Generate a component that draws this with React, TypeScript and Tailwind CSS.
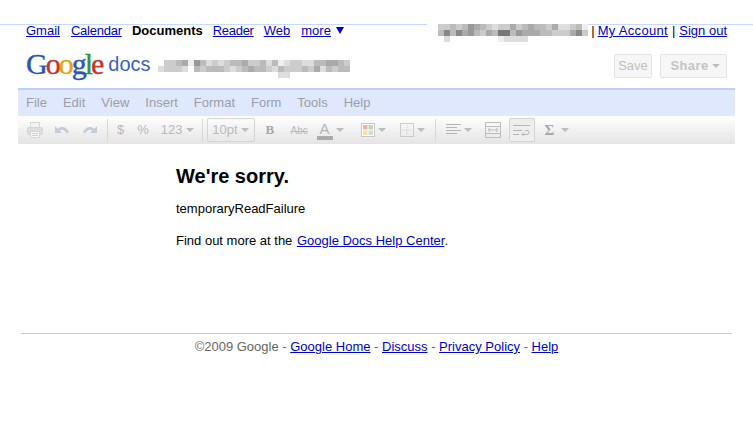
import type { ReactNode } from "react";

const SHADES = ["#ffffff", "#eeeeee", "#dddddd", "#cccccc", "#bbbbbb", "#aaaaaa", "#999999", "#888888", "#777777", "#666666"];

// blurred out bits of the screenshot (account email, doc title)
const EMAIL_BLUR = [
  "3343465432335345443522341",
  "4747564354884655544333573",
  "0200000000122220000000000",
];
const TITLE_BLUR = [
  "03345164232344533424123322445543",
  "23332043444323454432433343524344",
  "00000000000000000000220000000000",
];

function Mosaic({ rows, cell = 6 }: { rows: string[]; cell?: number }) {
  return (
    <svg width={rows[0].length * cell} height={rows.length * cell} className="block">
      {rows.flatMap((row, y) =>
        row.split("").map((c, x) => (
          <rect key={`${x}-${y}`} x={x * cell} y={y * cell} width={cell} height={cell} fill={SHADES[Number(c)]} />
        )),
      )}
    </svg>
  );
}

function NavLink({ className = "", children }: { className?: string; children: ReactNode }) {
  return <a className={`text-[#0000cc] underline ${className}`}>{children}</a>;
}

function Caret() {
  return <span className="ml-[3px] inline-block h-0 w-0 border-x-[4px] border-t-[4px] border-x-transparent border-t-[#bcbcbc]" />;
}

function Sep() {
  return <span className="h-[23px] w-px bg-[#d8d8d8]" />;
}

function PrintIcon() {
  return (
    <svg width="18" height="18" viewBox="0 0 18 18" fill="none" stroke="#d6d6d6">
      <rect x="4.5" y="1.5" width="9" height="5" fill="#f4f4f4" />
      <rect x="1.5" y="6.5" width="15" height="7" rx="1" fill="#dedede" />
      <rect x="4.5" y="10.5" width="9" height="6" fill="#f8f8f8" />
      <path d="M6 12.5h6M6 14.5h6" stroke="#cfcfcf" />
    </svg>
  );
}

function UndoIcon({ flip }: { flip?: boolean }) {
  return (
    <svg width="16" height="12" viewBox="0 0 16 12" className={flip ? "-scale-x-100" : ""}>
      <path d="M1 2v7h7L5.6 6.6C7.8 5 10.6 5.6 12.4 9.6L15 8.4C13 3 8.4 1.4 3.7 4.7Z" fill="#c6ccd6" />
    </svg>
  );
}

export default function App() {
  return (
    <div className="h-[445px] w-[753px] overflow-hidden bg-white font-['Liberation_Sans',Arial,sans-serif] text-[13px] text-black">
      <div className="h-[25px] border-b border-[#c3d9ff]" />

      <div className="relative -mt-[1px] mb-[1px] flex h-[13px] items-center justify-between px-[26px] leading-[13px]">
        <nav className="flex items-center">
          <NavLink>Gmail</NavLink>
          <NavLink className="ml-[11px] w-[51px] whitespace-nowrap tracking-[-0.25px]">Calendar</NavLink>
          <b className="ml-[10px] whitespace-nowrap">Documents</b>
          <NavLink className="ml-[10px] w-[41px] tracking-[-0.3px]">Reader</NavLink>
          <NavLink className="ml-[10px]">Web</NavLink>
          <NavLink className="ml-[11px]">more</NavLink>
          <span className="ml-[5px] h-0 w-0 border-x-[4px] border-t-[7px] border-x-transparent border-t-[#0000cc]" />
        </nav>
        <div className="flex items-center">
          <div className="absolute right-[165px] top-0 bg-white pl-[11px]">
            <Mosaic rows={EMAIL_BLUR} />
          </div>
          <span>|</span>
          <NavLink className="ml-[3px] tracking-[0.3px]">My Account</NavLink>
          <span className="ml-[4px]">|</span>
          <NavLink className="ml-[4px]">Sign out</NavLink>
        </div>
      </div>

      <div className="flex h-[50px] items-center justify-between px-[26px] pb-[1px]">
        <div className="flex items-center">
          <span className="mt-[3px] font-['Liberation_Serif',serif] text-[30px] leading-[30px] tracking-[-2px] [-webkit-text-stroke:0.4px]">
            <span className="text-[#2a55b5]">G</span>
            <span className="text-[#c9302a]">o</span>
            <span className="text-[#dfa70e]">o</span>
            <span className="text-[#2a55b5]">g</span>
            <span className="text-[#2b9440]">l</span>
            <span className="text-[#c9302a]">e</span>
          </span>
          <span className="ml-[6px] mt-[2px] text-[20px] leading-[24px] text-[#3b5fc0]">docs</span>
          <div className="ml-[7px] mt-[13px]">
            <Mosaic rows={TITLE_BLUR} />
          </div>
        </div>
        <div className="mt-[6px] flex items-center">
          <span className="flex h-[24px] w-[38px] items-center justify-center rounded-[2px] border border-[#e4e4e4] bg-[#f6f6f6] text-[#c0c0c0]">
            Save
          </span>
          <span className="ml-[8px] flex h-[24px] w-[67px] items-center justify-center rounded-[2px] border border-[#e4e4e4] bg-[#f6f6f6] pl-[3px] font-bold tracking-[0.4px] text-[#c4c4c4]">
            Share
            <Caret />
          </span>
        </div>
      </div>

      <div className="mx-[18px]">
        <div className="flex h-[28px] items-center gap-[16px] border-t-2 border-[#bccffb] bg-[#e0e8fd] pl-[8px] text-[#9a9fa8]">
          <span>File</span>
          <span>Edit</span>
          <span>View</span>
          <span>Insert</span>
          <span>Format</span>
          <span>Form</span>
          <span>Tools</span>
          <span>Help</span>
        </div>
        <div className="flex h-[28px] items-center bg-gradient-to-b from-white to-[#e4e4e4] pl-[8px] text-[#b9b9b9]">
          <PrintIcon />
          <span className="ml-[10px]"><UndoIcon /></span>
          <span className="ml-[12px]"><UndoIcon flip /></span>
          <span className="ml-[9px] flex"><Sep /></span>
          <span className="ml-[9px]">$</span>
          <span className="ml-[13px]">%</span>
          <span className="ml-[12px]">123</span>
          <Caret />
          <span className="ml-[8px] flex"><Sep /></span>
          <span className="ml-[4px] flex h-[24px] w-[48px] items-center justify-center rounded-[2px] border border-[#d4d4d4]">
            10pt
            <Caret />
          </span>
          <span className="ml-[11px] w-[10px] font-['Liberation_Serif',serif] font-bold text-[#a8a8a8]">B</span>
          <span className="ml-[15px] w-[17px] text-[10px] line-through">Abc</span>
          <span className="ml-[9px] flex w-[16px] flex-col items-center text-[15px] leading-[15px] text-[#b5b5b5]">
            A
            <span className="h-[4px] w-[16px] bg-[#aaaaaa]" />
          </span>
          <Caret />
          <svg className="ml-[17px]" width="14" height="14" viewBox="0 0 14 14">
            <rect x="0.5" y="0.5" width="13" height="13" fill="#fff" stroke="#c8c8c8" />
            <rect x="2" y="2" width="4.5" height="4.5" fill="#eeb0a8" />
            <rect x="7.5" y="2" width="4.5" height="4.5" fill="#b4dcae" />
            <rect x="2" y="7.5" width="4.5" height="4.5" fill="#f0e3a4" />
            <rect x="7.5" y="7.5" width="4.5" height="4.5" fill="#d8d8d8" />
          </svg>
          <Caret />
          <svg className="ml-[14px]" width="14" height="14" viewBox="0 0 14 14" fill="none" stroke="#cccccc">
            <rect x="0.5" y="0.5" width="13" height="13" />
            <path d="M7 2v10M2 7h10" strokeDasharray="1 1" />
          </svg>
          <Caret />
          <span className="ml-[10px] flex"><Sep /></span>
          <svg className="ml-[10px]" width="15" height="12" viewBox="0 0 15 12" stroke="#b5b5b5">
            <path d="M0 .5h15M0 3.5h11M0 6.5h15M0 9.5h11" />
          </svg>
          <Caret />
          <svg className="ml-[13px]" width="16" height="16" viewBox="0 0 16 16" fill="none" stroke="#bdbdbd">
            <path d="M.5.5h15v15H.5zM.5 4.5h15M.5 11.5h15M3 8h10M3 8l2-2M3 8l2 2M13 8l-2-2M13 8l-2 2" />
          </svg>
          <span className="ml-[8px] flex h-[24px] w-[26px] items-center justify-center rounded-[2px] border border-[#d4d4d4] bg-[#eeeeee]">
            <svg width="17" height="12" viewBox="0 0 17 12" fill="none" stroke="#b5b5b5">
              <path d="M0 1.5h17M0 6.5h9M0 10.5h6M9 10.5h5a2 2 0 0 0 0-4h-2M9 10.5l2-2M9 10.5l2 2" />
            </svg>
          </span>
          <span className="ml-[10px] w-[13px] font-['Liberation_Serif',serif] text-[15px] font-bold text-[#a8a8a8]">Σ</span>
          <Caret />
        </div>
      </div>

      <main className="pl-[176px]">
        <h1 className="mt-[20px] text-[20px] font-bold leading-[24px]">We're sorry.</h1>
        <p className="mt-[14px] leading-[14px]">temporaryReadFailure</p>
        <p className="mt-[18px] leading-[14px]">
          Find out more at the <NavLink className="ml-[1px]">Google Docs Help Center</NavLink>.
        </p>
      </main>

      <footer className="mx-[21px] mt-[85px] border-t border-[#cccccc] pt-[6px] text-center leading-[14px] text-[#666666]">
        ©2009 Google - <NavLink>Google Home</NavLink> - <NavLink>Discuss</NavLink> -{" "}
        <NavLink>Privacy Policy</NavLink> - <NavLink>Help</NavLink>
      </footer>
    </div>
  );
}
